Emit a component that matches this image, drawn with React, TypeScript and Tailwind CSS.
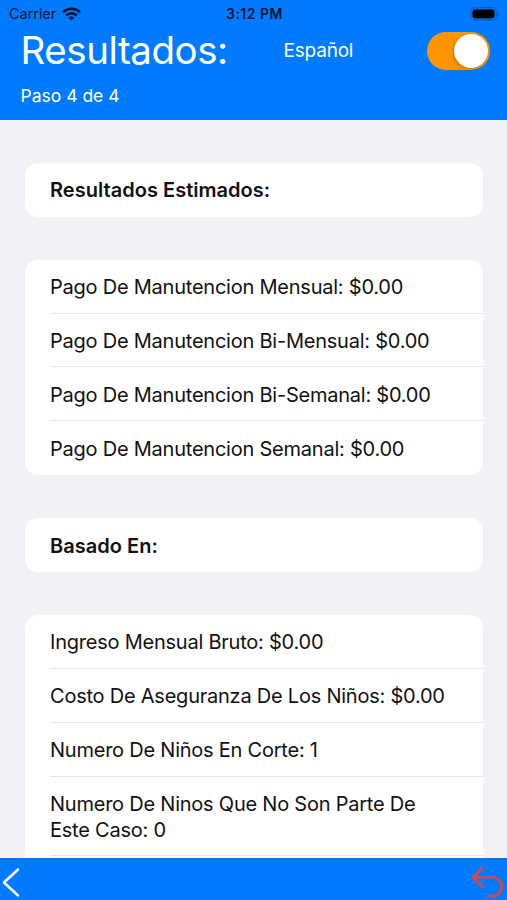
import { useState } from "react";

const payments = [
  "Pago De Manutencion Mensual: $0.00",
  "Pago De Manutencion Bi-Mensual: $0.00",
  "Pago De Manutencion Bi-Semanal: $0.00",
  "Pago De Manutencion Semanal: $0.00",
];

const details = [
  "Ingreso Mensual Bruto: $0.00",
  "Costo De Aseguranza De Los Niños: $0.00",
  "Numero De Niños En Corte: 1",
  "Numero De Ninos Que No Son Parte De Este Caso: 0",
];

function StatusBar() {
  return (
    <div className="grid h-[27px] grid-cols-3 items-center pl-[9px] pr-[7px] text-[14.5px] leading-none text-[#001536]">
      <div className="flex items-center gap-[6px]">
        <span className="pt-px tracking-[-0.05px]">Carrier</span>
        <svg width="19" height="14" viewBox="0 0 19 14" fill="none" stroke="#001027" strokeWidth="2.5">
          <path d="M1 5.2C5.8.6 13.2.6 18 5.2" />
          <path d="M4.1 8.5c3.1-2.9 7.7-2.9 10.8 0" />
          <path d="M9.5 13.5 6.6 10.7c1.7-1.5 4.1-1.5 5.8 0z" fill="#001027" stroke="none" />
        </svg>
      </div>
      <span className="text-center text-[14px] font-semibold tracking-[0.5px]">
        3:12 PM
      </span>
      <svg className="justify-self-end" width="30" height="14" viewBox="0 0 30 14">
        <rect x="0.7" y="0.7" width="25.6" height="12.6" rx="4" fill="none" stroke="#0060c4" strokeWidth="1.2" />
        <rect x="2.5" y="2.5" width="22" height="9" rx="2.4" fill="#000" />
        <path d="M27.6 4.8c1.8.7 1.8 3.7 0 4.4z" fill="#0058b8" />
      </svg>
    </div>
  );
}

function SectionTitle({ children }: { children: string }) {
  return (
    <h2 className="flex h-[53.7px] shrink-0 items-center rounded-[13px] bg-white pt-px pl-[25px] text-[20px] font-semibold tracking-[0.03px]">
      {children}
    </h2>
  );
}

function ResultList({ items }: { items: string[] }) {
  return (
    <ul className="shrink-0 rounded-[13px] bg-white pl-[25px]">
      {items.map((item) => (
        <li
          key={item}
          className="border-b border-[#e6e6e9] pt-[14.3px] pb-[12.5px] pr-[36px] text-[20px] leading-[26px] tracking-[-0.23px] last:border-transparent"
        >
          {item}
        </li>
      ))}
    </ul>
  );
}

export default function App() {
  const [spanish, setSpanish] = useState(true);

  return (
    <div className="flex h-[900px] w-[507px] flex-col overflow-hidden bg-[#f1f1f6] font-['Inter',sans-serif] text-[#111]">
      {/* Header */}
      <header className="h-[120px] shrink-0 bg-[#007aff] text-white">
        <StatusBar />

        <div className="flex h-[47px] items-center pl-[20.5px] pr-[17px]">
          <h1 className="w-[263px] text-[38.5px] leading-none tracking-[-0.45px]">
            Resultados:
          </h1>
          <span className="text-[19px] leading-none tracking-[-0.2px]">
            Español
          </span>
          <button
            type="button"
            role="switch"
            aria-checked={spanish}
            aria-label="Español"
            onClick={() => setSpanish(!spanish)}
            className="ml-auto flex h-[38px] w-[63px] items-center justify-end rounded-full bg-[#ff9500] pr-[2px]"
          >
            <span className="h-[34px] w-[34px] rounded-full bg-white shadow-[-1px_1px_3px_rgba(0,0,0,0.25)]" />
          </button>
        </div>

        <p className="mt-[10px] pl-[20.5px] text-[17.5px] leading-[24px]">
          Paso 4 de 4
        </p>
      </header>

      {/* Results */}
      <main className="flex min-h-0 flex-1 flex-col gap-[43.2px] overflow-hidden pt-[43px] pr-[24px] pl-[25px]">
        <SectionTitle>Resultados Estimados:</SectionTitle>
        <ResultList items={payments} />
        <SectionTitle>Basado En:</SectionTitle>
        <ResultList items={[...details, ""]} />
      </main>

      {/* Navigation */}
      <footer className="flex h-[42px] shrink-0 items-center justify-between bg-[#007aff]">
        <button type="button" aria-label="Atrás">
          <svg width="24" height="42" viewBox="0 0 24 42" fill="none" stroke="#fff" strokeWidth="2.5" strokeLinecap="round" strokeLinejoin="round">
            <path d="M18 11.5 4 24.5 18 37.5" />
          </svg>
        </button>
        <button type="button" aria-label="Reiniciar">
          <svg width="37" height="42" viewBox="0 0 37 42" fill="none" stroke="#dc4446" strokeWidth="2.7" strokeLinecap="round" strokeLinejoin="round">
            <path d="M12.5 10 3 19.5l9.5 9.5M3 19.5h19.5a9.2 9.2 0 0 1 0 18.5h-4.5" />
          </svg>
        </button>
      </footer>
    </div>
  );
}
